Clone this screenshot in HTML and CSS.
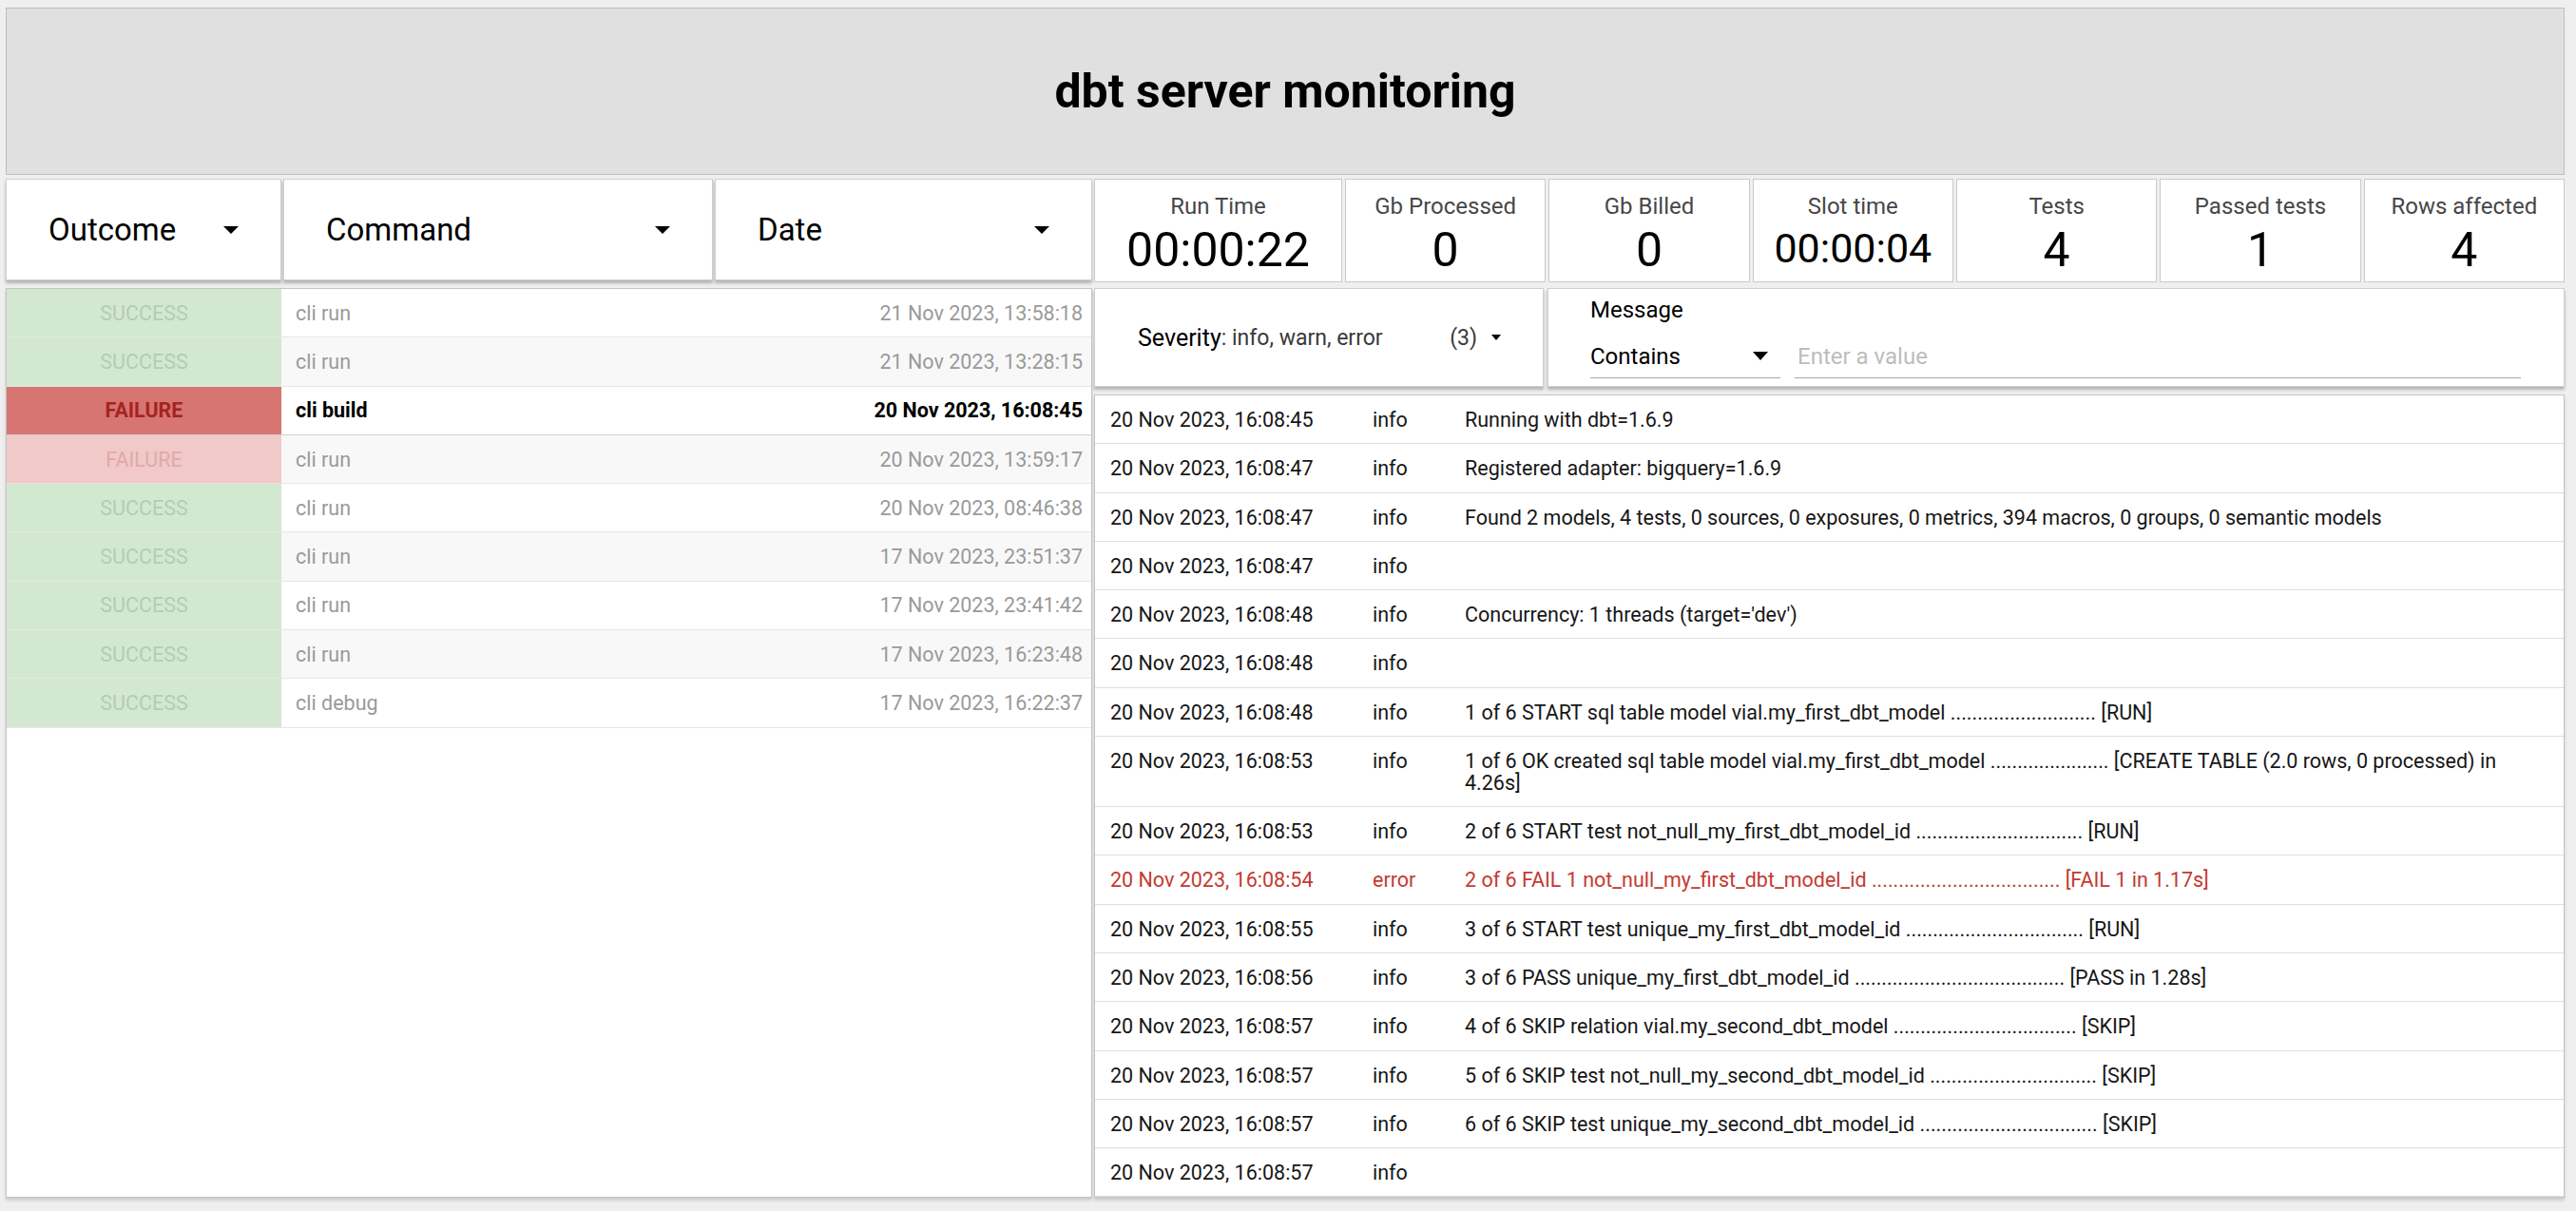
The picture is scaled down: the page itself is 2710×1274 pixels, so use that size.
FILE: index.html
```html
<!DOCTYPE html>
<html lang="en">
<head>
<meta charset="utf-8">
<title>dbt server monitoring</title>
<link rel="stylesheet" href="styles.css">
</head>
<body>
<div class="app">
  <header class="title-bar"><h1>dbt server monitoring</h1></header>
  <div class="main">
    <section class="left">
      <div class="filters">
        <div class="dd"><span>Outcome</span><i class="caret"></i></div>
        <div class="dd"><span>Command</span><i class="caret"></i></div>
        <div class="dd"><span>Date</span><i class="caret"></i></div>
      </div>
      <div class="runs">
        <div class="run"><div class="oc ok">SUCCESS</div><div class="cmd">cli run</div><div class="dt">21 Nov 2023, 13:58:18</div></div>
        <div class="run alt"><div class="oc ok">SUCCESS</div><div class="cmd">cli run</div><div class="dt">21 Nov 2023, 13:28:15</div></div>
        <div class="run sel"><div class="oc fail">FAILURE</div><div class="cmd">cli build</div><div class="dt">20 Nov 2023, 16:08:45</div></div>
        <div class="run alt"><div class="oc fail">FAILURE</div><div class="cmd">cli run</div><div class="dt">20 Nov 2023, 13:59:17</div></div>
        <div class="run"><div class="oc ok">SUCCESS</div><div class="cmd">cli run</div><div class="dt">20 Nov 2023, 08:46:38</div></div>
        <div class="run alt"><div class="oc ok">SUCCESS</div><div class="cmd">cli run</div><div class="dt">17 Nov 2023, 23:51:37</div></div>
        <div class="run"><div class="oc ok">SUCCESS</div><div class="cmd">cli run</div><div class="dt">17 Nov 2023, 23:41:42</div></div>
        <div class="run alt"><div class="oc ok">SUCCESS</div><div class="cmd">cli run</div><div class="dt">17 Nov 2023, 16:23:48</div></div>
        <div class="run"><div class="oc ok">SUCCESS</div><div class="cmd">cli debug</div><div class="dt">17 Nov 2023, 16:22:37</div></div>
      </div>
    </section>
    <section class="right">
      <div class="stats">
        <div class="stat"><div class="lbl">Run Time</div><div class="val">00:00:22</div></div>
        <div class="stat"><div class="lbl">Gb Processed</div><div class="val">0</div></div>
        <div class="stat"><div class="lbl">Gb Billed</div><div class="val">0</div></div>
        <div class="stat"><div class="lbl">Slot time</div><div class="val val-small">00:00:04</div></div>
        <div class="stat"><div class="lbl">Tests</div><div class="val">4</div></div>
        <div class="stat"><div class="lbl">Passed tests</div><div class="val">1</div></div>
        <div class="stat"><div class="lbl">Rows affected</div><div class="val">4</div></div>
      </div>
      <div class="log-filters">
        <div class="sev">
          <span class="sev-name">Severity</span><span class="sev-vals">: info, warn, error</span>
          <span class="sev-count">(3)</span><i class="caret small"></i>
        </div>
        <div class="msg">
          <div class="msg-lbl">Message</div>
          <div class="msg-row">
            <div class="contains"><span>Contains</span><i class="caret mid"></i></div>
            <div class="value-input">Enter a value</div>
          </div>
        </div>
      </div>
      <div class="log">
        <div class="lr"><div class="ld">20 Nov 2023, 16:08:45</div><div class="ls">info</div><div class="lm">Running with dbt=1.6.9</div></div>
        <div class="lr"><div class="ld">20 Nov 2023, 16:08:47</div><div class="ls">info</div><div class="lm">Registered adapter: bigquery=1.6.9</div></div>
        <div class="lr"><div class="ld">20 Nov 2023, 16:08:47</div><div class="ls">info</div><div class="lm">Found 2 models, 4 tests, 0 sources, 0 exposures, 0 metrics, 394 macros, 0 groups, 0 semantic models</div></div>
        <div class="lr"><div class="ld">20 Nov 2023, 16:08:47</div><div class="ls">info</div><div class="lm"></div></div>
        <div class="lr"><div class="ld">20 Nov 2023, 16:08:48</div><div class="ls">info</div><div class="lm">Concurrency: 1 threads (target='dev')</div></div>
        <div class="lr"><div class="ld">20 Nov 2023, 16:08:48</div><div class="ls">info</div><div class="lm"></div></div>
        <div class="lr"><div class="ld">20 Nov 2023, 16:08:48</div><div class="ls">info</div><div class="lm">1 of 6 START sql table model vial.my_first_dbt_model ........................... [RUN]</div></div>
        <div class="lr"><div class="ld">20 Nov 2023, 16:08:53</div><div class="ls">info</div><div class="lm">1 of 6 OK created sql table model vial.my_first_dbt_model ...................... [CREATE TABLE (2.0 rows, 0 processed) in 4.26s]</div></div>
        <div class="lr"><div class="ld">20 Nov 2023, 16:08:53</div><div class="ls">info</div><div class="lm">2 of 6 START test not_null_my_first_dbt_model_id ............................... [RUN]</div></div>
        <div class="lr err"><div class="ld">20 Nov 2023, 16:08:54</div><div class="ls">error</div><div class="lm">2 of 6 FAIL 1 not_null_my_first_dbt_model_id ................................... [FAIL 1 in 1.17s]</div></div>
        <div class="lr"><div class="ld">20 Nov 2023, 16:08:55</div><div class="ls">info</div><div class="lm">3 of 6 START test unique_my_first_dbt_model_id ................................. [RUN]</div></div>
        <div class="lr"><div class="ld">20 Nov 2023, 16:08:56</div><div class="ls">info</div><div class="lm">3 of 6 PASS unique_my_first_dbt_model_id ....................................... [PASS in 1.28s]</div></div>
        <div class="lr"><div class="ld">20 Nov 2023, 16:08:57</div><div class="ls">info</div><div class="lm">4 of 6 SKIP relation vial.my_second_dbt_model .................................. [SKIP]</div></div>
        <div class="lr"><div class="ld">20 Nov 2023, 16:08:57</div><div class="ls">info</div><div class="lm">5 of 6 SKIP test not_null_my_second_dbt_model_id ............................... [SKIP]</div></div>
        <div class="lr"><div class="ld">20 Nov 2023, 16:08:57</div><div class="ls">info</div><div class="lm">6 of 6 SKIP test unique_my_second_dbt_model_id ................................. [SKIP]</div></div>
        <div class="lr"><div class="ld">20 Nov 2023, 16:08:57</div><div class="ls">info</div><div class="lm"></div></div>
      </div>
    </section>
  </div>
</div>
</body>
</html>
```

FILE: styles.css
```css
* { box-sizing: border-box; }
html, body { margin: 0; padding: 0; }
body {
  background: #efefef;
  font-family: Roboto, "Liberation Sans", sans-serif;
  color: #000;
  width: 2710px;
  height: 1274px;
  overflow: hidden;
}
.app {
  height: 1274px;
  padding: 8px 12px 14px 6px;
  display: grid;
  grid-template-rows: 176px 1fr;
  row-gap: 4px;
}
.title-bar {
  background: #e0e0e0;
  border: 1px solid #bdbdbd;
  display: flex;
  align-items: center;
  justify-content: center;
}
.title-bar h1 {
  margin: 0;
  font-size: 50px;
  font-weight: 700;
  line-height: 1;
}
.main {
  display: grid;
  grid-template-columns: 1143px 1fr;
  column-gap: 2px;
  min-height: 0;
}
.left {
  display: grid;
  grid-template-rows: 107px 1fr;
  row-gap: 8px;
  min-height: 0;
}
.filters {
  display: grid;
  grid-template-columns: 290px 452px 1fr;
  column-gap: 2px;
}
.dd {
  background: #fff;
  border: 1px solid #cfcfcf;
  box-shadow: 0 3px 3px rgba(0,0,0,0.25);
  display: flex;
  align-items: center;
  justify-content: space-between;
  padding: 0 44px;
  font-size: 33px;
}
.caret {
  display: block;
  width: 0; height: 0;
  border-left: 8px solid transparent;
  border-right: 8px solid transparent;
  border-top: 8px solid #000;
}
.caret.small {
  border-left-width: 5px;
  border-right-width: 5px;
  border-top-width: 6px;
}
.caret.mid {
  border-left-width: 8px;
  border-right-width: 8px;
  border-top-width: 9px;
}
.runs {
  background: #fff;
  border: 1px solid #c4c4c4;
  box-shadow: 0 3px 3px rgba(0,0,0,0.15);
}
.run {
  height: 51.3px;
  display: grid;
  grid-template-columns: 289px 1fr auto;
  align-items: stretch;
  font-size: 21.5px;
  color: #9a9a9a;
  border-bottom: 1px solid #e6e6e6;
}
.run.alt { background: #f8f8f8; }
.run > div { display: flex; align-items: center; }
.oc { justify-content: center; }
.oc.ok { background: #d3e8d1; color: #b4cdb2; }
.oc.fail { background: #f0c9c8; color: #e2a9a8; }
.cmd { padding-left: 15px; }
.dt { padding-right: 9px; }
.run.sel { color: #000; font-weight: 700; border-bottom: 1px solid #d0d0d0; }
.run.sel .oc.fail { background: #d67572; color: #a5231f; }

.right {
  display: grid;
  grid-template-rows: 109px 104px 1fr;
  row-gap: 6px;
  min-height: 0;
}
.stats {
  display: grid;
  grid-template-columns: 261px repeat(6, 1fr);
  column-gap: 3px;
}
.stat {
  background: #fff;
  border: 1px solid #cacaca;
  display: flex;
  flex-direction: column;
  align-items: center;
  padding-top: 13px;
}
.lbl { font-size: 24px; color: #474747; line-height: 30px; }
.val { font-size: 50px; line-height: 56px; color: #000; margin-top: 3px; }
.val.val-small { font-size: 43px; line-height: 50px; margin-top: 4px; }
.log-filters {
  display: grid;
  grid-template-columns: 473px 1fr;
  column-gap: 4px;
}
.sev, .msg {
  background: #fff;
  border: 1px solid #cfcfcf;
  box-shadow: 0 3px 3px rgba(0,0,0,0.25);
}
.sev {
  display: flex;
  align-items: center;
  padding: 0 44px 0 45px;
  white-space: nowrap;
}
.sev-name { font-size: 25px; }
.sev-vals { font-size: 23px; color: #3a3a3a; flex: 1; }
.sev-count { font-size: 23px; color: #3a3a3a; margin-right: 15px; }
.msg {
  padding: 8px 45px 0 44px;
  display: flex;
  flex-direction: column;
}
.msg-lbl { font-size: 24px; line-height: 28px; }
.msg-row {
  display: flex;
  margin-top: 12px;
  column-gap: 15px;
}
.contains {
  width: 200px;
  height: 46px;
  border-bottom: 1px solid #a9a9a9;
  display: flex;
  align-items: center;
  justify-content: space-between;
  padding-right: 13px;
  font-size: 24px;
}
.value-input {
  flex: 1;
  height: 46px;
  border-bottom: 1px solid #a9a9a9;
  display: flex;
  align-items: center;
  padding-left: 3px;
  font-size: 24px;
  color: #bdbdbd;
}
.log {
  margin-top: 2px;
  background: #fff;
  border: 1px solid #c4c4c4;
  box-shadow: 0 3px 3px rgba(0,0,0,0.15);
  overflow: hidden;
}
.lr {
  display: grid;
  grid-template-columns: 276px 97px 1fr;
  font-size: 21.5px;
  line-height: 23px;
  padding: 14px 0 13px 16px;
  border-bottom: 1px solid #dedede;
  color: #161616;
  min-height: 51.3px;
}
.lm { padding-right: 40px; }
.lr.err { color: #c43a31; }
```
